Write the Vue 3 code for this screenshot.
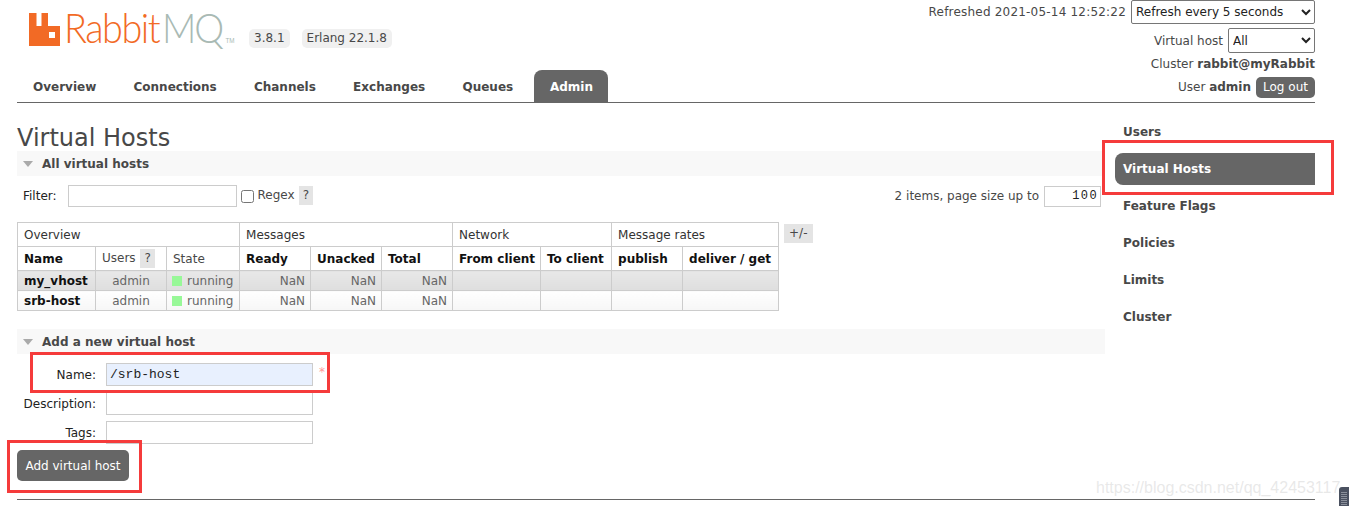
<script setup>
const tabs = ['Overview', 'Connections', 'Channels', 'Exchanges', 'Queues', 'Admin']
const sideLinks = ['Users', 'Virtual Hosts', 'Feature Flags', 'Policies', 'Limits', 'Cluster']
const vhosts = [
  { name: 'my_vhost', user: 'admin', state: 'running' },
  { name: 'srb-host', user: 'admin', state: 'running' }
]
</script>

<template>
  <div class="page">
    <header class="header">
      <div class="logo">
        <svg class="logo-mark" width="31" height="33" viewBox="0 0 31 33">
          <path fill="#f26a25" fill-rule="evenodd" d="M0 0h7.500v13h5V0H19v13h12v20H0zM20 19v6h6v-6z" />
        </svg>
        <span class="logo-word"><span class="logo-rabbit">Rabbit</span><span class="logo-mq">MQ</span><span class="logo-tm">TM</span></span>
      </div>
      <div class="versions">
        <span class="pill">3.8.1</span>
        <span class="pill">Erlang 22.1.8</span>
      </div>
      <div class="status">
        <div class="status-row status-first">
          <span class="refreshed">Refreshed 2021-05-14 12:52:22</span>
          <select class="sel sel-refresh"><option>Refresh every 5 seconds</option></select>
        </div>
        <div class="status-row status-vhost">
          <span>Virtual host</span>
          <select class="sel sel-vhost"><option>All</option></select>
        </div>
        <div class="status-row status-cluster">Cluster&nbsp;<b>rabbit@myRabbit</b></div>
        <div class="status-row status-user">User&nbsp;<b>admin</b><button class="logout">Log out</button></div>
      </div>
    </header>

    <nav class="tabs">
      <a v-for="t in tabs" :key="t" :class="['tab', { active: t === 'Admin' }]">{{ t }}</a>
    </nav>

    <div class="body">
      <main class="main">
        <h1>Virtual Hosts</h1>
        <div class="section-head"><i class="tri"></i>All virtual hosts</div>

        <div class="filter">
          <div class="filter-left">
            <span class="filter-label">Filter:</span>
            <input class="field filter-input" />
            <input type="checkbox" class="check" />
            <span class="regex">Regex</span>
            <span class="help">?</span>
          </div>
          <div class="filter-right">
            <span>2 items, page size up to</span>
            <input class="field page-size" value="100" />
          </div>
        </div>

        <div class="table-wrap">
          <table class="list">
            <colgroup>
              <col style="width:78px" /><col style="width:71px" /><col style="width:73px" />
              <col style="width:71px" /><col style="width:71px" /><col style="width:71px" />
              <col style="width:88px" /><col style="width:71px" /><col style="width:71px" /><col style="width:96px" />
            </colgroup>
            <thead>
              <tr class="group-row">
                <th colspan="3">Overview</th>
                <th colspan="3">Messages</th>
                <th colspan="2">Network</th>
                <th colspan="2">Message rates</th>
              </tr>
              <tr class="col-row">
                <th class="strong">Name</th>
                <th>Users <span class="help help-th">?</span></th>
                <th>State</th>
                <th class="strong">Ready</th>
                <th class="strong">Unacked</th>
                <th class="strong">Total</th>
                <th class="strong">From client</th>
                <th class="strong">To client</th>
                <th class="strong">publish</th>
                <th class="strong">deliver / get</th>
              </tr>
            </thead>
            <tbody>
              <tr v-for="(v, i) in vhosts" :key="v.name" :class="i % 2 ? 'even' : 'odd'">
                <td class="vname">{{ v.name }}</td>
                <td class="center">{{ v.user }}</td>
                <td class="state"><i class="dot"></i>{{ v.state }}</td>
                <td class="num">NaN</td>
                <td class="num">NaN</td>
                <td class="num">NaN</td>
                <td></td><td></td><td></td><td></td>
              </tr>
            </tbody>
          </table>
          <span class="help plus">+/-</span>
        </div>

        <div class="section-head add-head"><i class="tri"></i>Add a new virtual host</div>
        <form class="add-form" @submit.prevent>
          <label class="form-row name-row">
            <span class="form-label">Name:</span>
            <input class="field form-input name-input" value="/srb-host" />
            <span class="req">*</span>
          </label>
          <label class="form-row">
            <span class="form-label">Description:</span>
            <input class="field form-input" />
          </label>
          <label class="form-row">
            <span class="form-label">Tags:</span>
            <input class="field form-input" />
          </label>
          <button class="add-btn">Add virtual host</button>
        </form>
      </main>

      <aside class="side">
        <a v-for="s in sideLinks" :key="s" :class="['side-link', { active: s === 'Virtual Hosts' }]">{{ s }}</a>
      </aside>
    </div>

    <div class="foot-line"></div>

    <!-- annotations on top of the screenshot -->
    <div class="mark mark-side"></div>
    <div class="mark mark-name"></div>
    <div class="mark mark-btn"></div>
    <div class="watermark">https://blog.csdn.net/qq_42453117</div>
    <div class="grip"></div>
  </div>
</template>

<style>
html, body { margin: 0; background: #fff; overflow: hidden; }
</style>

<style scoped>
.page {
  position: relative;
  width: 1349px;
  height: 506px;
  overflow: hidden;
  padding: 0 34px 0 17px;
  box-sizing: border-box;
  font-family: "DejaVu Sans", Verdana, sans-serif;
  font-size: 12px;
  color: #484848;
}

.header { display: flex; height: 70px; position: relative; }
.logo { display: flex; align-items: flex-start; flex-shrink: 0; width: 232px; padding: 13px 0 0 12px; box-sizing: border-box; line-height: 33px; }
.logo-mark { flex-shrink: 0; margin-right: 4px; }
.logo-word { display: flex; align-items: baseline; margin-top: -2px; white-space: nowrap; transform: scaleX(0.9); transform-origin: left center; }
.logo-rabbit, .logo-mq { font-family: Lato, "Liberation Sans", sans-serif; font-weight: 300; font-size: 42px; letter-spacing: -1.6px; }
.logo-rabbit { color: #f26a25; margin-right: 3px; }
.logo-mq { color: #a9bab4; letter-spacing: -2.5px; }
.logo-tm { font-family: "Liberation Sans", sans-serif; font-size: 7px; color: #a9bab4; margin-left: 4px; }
.versions { display: flex; gap: 12px; padding-top: 29px; align-items: flex-start; }
.pill { background: #f0f0f0; border-radius: 5px; padding: 0 5px; line-height: 19px; font-size: 12px; color: #484848; }
.status { margin-left: auto; display: flex; flex-direction: column; align-items: flex-end; }
.status-row { display: flex; align-items: center; justify-content: flex-end; flex-shrink: 0; }
.status-first { gap: 5px; height: 24px; }
.refreshed { letter-spacing: 0.2px; }
.status-vhost { gap: 5px; height: 27px; margin-top: 3px; }
.status-cluster { height: 20px; margin-top: 0; }
.status-user { height: 24px; margin-top: 1px; }
.status b { font-weight: 700; }
.sel {
  height: 24px;
  box-sizing: border-box;
  background: #fff;
  border: 1px solid #767676;
  border-radius: 2px;
  color: #222;
  font-family: "DejaVu Sans", sans-serif;
  font-size: 12px;
}
.sel-refresh { width: 184px; }
.sel-vhost { width: 87px; height: 25px; }
.logout {
  margin-left: 5px;
  height: 21px;
  width: 59px;
  padding: 0;
  border: 0;
  border-radius: 5px;
  background: #666;
  color: #fff;
  font-family: "DejaVu Sans", sans-serif;
  font-size: 12px;
}

.tabs { display: flex; height: 32px; width: 1298px; border-bottom: 1px solid #666; }
.tab {
  display: flex;
  align-items: center;
  padding: 2px 16px 0;
  margin-right: 5.250px;
  font-weight: 700;
  font-size: 12px;
  color: #484848;
  border-radius: 8px 8px 0 0;
}
.tab.active { background: #666; color: #fff; padding: 2px 15.500px 0; }

.body { display: flex; width: 1298px; }
.main { width: 1088px; }
h1 { margin: 0; padding-top: 21px; font-size: 24px; line-height: 29px; font-weight: 400; color: #484848; height: 27px; }
.section-head {
  display: flex;
  align-items: center;
  height: 25px;
  background: #f8f8f8;
  font-weight: 700;
  font-size: 12px;
  box-sizing: border-box;
}
.tri {
  width: 0; height: 0;
  margin: 0 9px 0 6px;
  border-left: 5.500px solid transparent;
  border-right: 5.500px solid transparent;
  border-top: 6px solid #aaa;
}

.filter { display: flex; justify-content: space-between; align-items: center; height: 24px; margin-top: 8px; }
.filter-left, .filter-right { display: flex; align-items: center; }
.filter-label { color: #222; margin: 0 11px 0 6px; }
.field { box-sizing: border-box; border: 1px solid #ccc; background: #fff; outline: none; margin: 0; }
.filter-input { width: 169px; height: 22px; }
.check { width: 13px; height: 13px; margin: 0 4px 0 4px; }
.regex { margin-right: 4px; margin-top: -2px; }
.help { display: inline-block; background: #e4e4e4; line-height: 19px; padding: 0 4px; color: #484848; }
.filter-left .help { margin-top: -2px; }
.filter-right { gap: 5px; margin-right: 4px; }
.page-size { width: 57px; height: 21px; text-align: right; font-family: "Liberation Mono", monospace; font-size: 12px; padding-right: 2px; letter-spacing: 1.400px; color: #222; }

.table-wrap { display: flex; align-items: flex-start; margin-top: 14px; }
.list { border-collapse: collapse; table-layout: fixed; width: 761px; font-size: 12px; }
.list th, .list td { border: 1px solid #ccc; padding: 0 6px; white-space: nowrap; overflow: hidden; text-align: left; }
.list th { font-weight: 400; color: #222; height: 23px; }
.col-row th { color: #484848; }
.list th.strong { font-weight: 700; color: #111; }
.group-row th { color: #333; }
.help-th { line-height: 19px; margin-left: 1px; }
.list td { height: 18px; padding-top: 1px; line-height: 18px; color: #666; }
.odd td { background: linear-gradient(#e8e8e8, #dedede); }
.even td { background: linear-gradient(#fff, #f6f6f6); }
.list .vname { font-weight: 700; color: #111; }
.center { text-align: center !important; }
.list .num { text-align: right; padding-right: 5px; }
.dot { display: inline-block; width: 10px; height: 10px; background: #98f898; margin-right: 5px; vertical-align: -1px; }
.list .state { padding-left: 5px; }
.plus { margin: 2px 0 0 5px; padding: 0 5px; color: #484848; }

.add-head { margin-top: 18px; }
.form-row { display: flex; align-items: center; height: 28px; margin-top: 1px; }
.form-label { width: 79px; text-align: right; color: #222; margin-right: 10px; padding-top: 2px; }
.form-input { width: 207px; height: 23px; }
.form-row.name-row { margin-top: 6px; }
.name-input { background: #e8f0fe; font-family: "Liberation Mono", monospace; font-size: 13px; padding-left: 3px; color: #222; }
.req { color: #f99; margin: -4px 0 0 6px; }
.add-btn {
  display: block;
  margin-top: 4px;
  width: 112px;
  height: 31px;
  padding: 0;
  border: 0;
  border-radius: 5px;
  background: #666;
  color: #fff;
  font-family: "DejaVu Sans", sans-serif;
  font-size: 12px;
}

.side { width: 200px; margin-left: 10px; padding-top: 13px; display: flex; flex-direction: column; }
.side-link {
  display: flex;
  align-items: center;
  height: 32px;
  margin-bottom: 5px;
  padding-left: 8px;
  font-weight: 700;
  font-size: 12px;
  color: #484848;
}
.side-link.active { background: #666; color: #fff; border-radius: 8px 0 0 8px; }

.foot-line { position: absolute; left: 17px; top: 499px; width: 1298px; height: 1px; background: #666; }

.mark { position: absolute; border: 3px solid #f53b3b; box-sizing: border-box; pointer-events: none; }
.mark-side { left: 1102px; top: 140px; width: 232px; height: 55px; }
.mark-name { left: 30px; top: 352px; width: 300px; height: 41px; }
.mark-btn { left: 7px; top: 440px; width: 135px; height: 53px; }

.watermark {
  position: absolute;
  left: 1096px;
  top: 479px;
  font-family: "Liberation Sans", sans-serif;
  font-size: 16px;
  color: rgba(190, 190, 190, 0.35);
  white-space: nowrap;
}
.grip {
  position: absolute;
  left: 1339px;
  top: 487px;
  width: 10px;
  height: 19px;
  background: #4a5160;
  border-radius: 3px 0 0 0;
  background-image: repeating-linear-gradient(#4a5160 0 1px, #8a8f9a 1px 2px);
  background-size: 6px 14px;
  background-position: 2px 4px;
  background-repeat: no-repeat;
}
</style>
